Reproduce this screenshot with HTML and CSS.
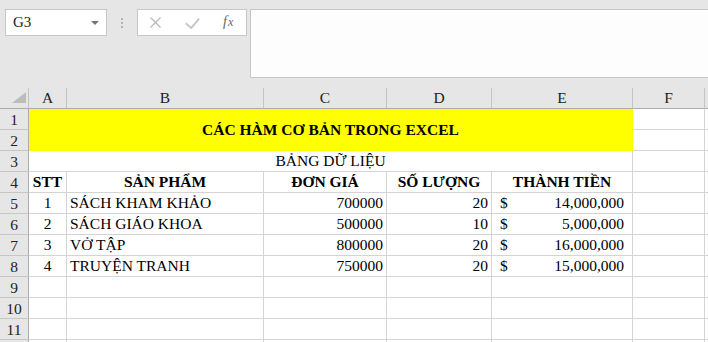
FILE: index.html
```html
<!DOCTYPE html>
<html lang="vi">

<head>
    <meta charset="UTF-8">
    <meta name="viewport" content="width=device-width, initial-scale=1.0">
    <title>Các hàm cơ bản trong Excel</title>
    <link rel="stylesheet" href="styles.css">
</head>

<body>
    <!-- thanh công thức -->
    <div class="toolbar">
        <div class="name-box">
            <span class="name-text">G3</span>
            <span class="caret"></span>
        </div>
        <div class="grip"><i></i><i></i><i></i></div>
        <div class="fx-box">
            <svg class="icon-cancel" width="11" height="11" viewBox="0 0 11 11">
                <path d="M0.5 0.5 L10.5 10.5 M10.5 0.5 L0.5 10.5" stroke="#b8b8b8" stroke-width="1.2" fill="none" />
            </svg>
            <svg class="icon-enter" width="15" height="11" viewBox="0 0 15 11">
                <path d="M0.7 5.2 L6.2 10 L14.3 0.6" stroke="#c8c8c8" stroke-width="2" fill="none" />
            </svg>
            <span class="fx">f<span class="fx-x">x</span></span>
        </div>
        <div class="formula-input"></div>
    </div>

    <!-- bảng tính -->
    <div class="sheet">
        <div class="corner">
            <svg width="14" height="11" viewBox="0 0 14 11">
                <polygon points="14,0 14,11 0,11" fill="#bdbdbd" />
            </svg>
        </div>
        <div class="col-hdr">A</div>
        <div class="col-hdr">B</div>
        <div class="col-hdr">C</div>
        <div class="col-hdr">D</div>
        <div class="col-hdr">E</div>
        <div class="col-hdr">F</div>
        <div class="col-hdr"></div>

        <div class="row-hdr">1</div>
        <div class="cell title">CÁC HÀM CƠ BẢN TRONG EXCEL</div>
        <div class="cell"></div>
        <div class="cell"></div>

        <div class="row-hdr">2</div>
        <div class="cell"></div>
        <div class="cell"></div>

        <div class="row-hdr">3</div>
        <div class="cell caption">BẢNG DỮ LIỆU</div>
        <div class="cell"></div>
        <div class="cell"></div>

        <div class="row-hdr">4</div>
        <div class="cell th">STT</div>
        <div class="cell th">SẢN PHẨM</div>
        <div class="cell th">ĐƠN GIÁ</div>
        <div class="cell th">SỐ LƯỢNG</div>
        <div class="cell th">THÀNH TIỀN</div>
        <div class="cell"></div>
        <div class="cell"></div>

        <div class="row-hdr">5</div>
        <div class="cell center">1</div>
        <div class="cell">SÁCH KHAM KHẢO</div>
        <div class="cell num">700000</div>
        <div class="cell num">20</div>
        <div class="cell acct"><span>$</span><span>14,000,000</span></div>
        <div class="cell"></div>
        <div class="cell"></div>

        <div class="row-hdr">6</div>
        <div class="cell center">2</div>
        <div class="cell">SÁCH GIÁO KHOA</div>
        <div class="cell num">500000</div>
        <div class="cell num">10</div>
        <div class="cell acct"><span>$</span><span>5,000,000</span></div>
        <div class="cell"></div>
        <div class="cell"></div>

        <div class="row-hdr">7</div>
        <div class="cell center">3</div>
        <div class="cell">VỞ TẬP</div>
        <div class="cell num">800000</div>
        <div class="cell num">20</div>
        <div class="cell acct"><span>$</span><span>16,000,000</span></div>
        <div class="cell"></div>
        <div class="cell"></div>

        <div class="row-hdr">8</div>
        <div class="cell center">4</div>
        <div class="cell">TRUYỆN TRANH</div>
        <div class="cell num">750000</div>
        <div class="cell num">20</div>
        <div class="cell acct"><span>$</span><span>15,000,000</span></div>
        <div class="cell"></div>
        <div class="cell"></div>

        <div class="row-hdr">9</div>
        <div class="cell"></div><div class="cell"></div><div class="cell"></div><div class="cell"></div>
        <div class="cell"></div><div class="cell"></div><div class="cell"></div>

        <div class="row-hdr">10</div>
        <div class="cell"></div><div class="cell"></div><div class="cell"></div><div class="cell"></div>
        <div class="cell"></div><div class="cell"></div><div class="cell"></div>

        <div class="row-hdr">11</div>
        <div class="cell"></div><div class="cell"></div><div class="cell"></div><div class="cell"></div>
        <div class="cell"></div><div class="cell"></div><div class="cell"></div>

        <!-- hàng 12 chỉ lộ 2px ở mép dưới -->
        <div class="row-hdr edge"></div>
        <div class="cell edge"></div><div class="cell edge"></div><div class="cell edge"></div><div class="cell edge"></div>
        <div class="cell edge"></div><div class="cell edge"></div><div class="cell edge"></div>
    </div>
</body>

</html>
```

FILE: styles.css
```css
body {
    margin: 0;
    overflow: hidden;
    background: #ffffff;
    font-family: "Liberation Serif", "Times New Roman", serif;
    font-size: 15.5px;
    color: #000;
}

/* thanh công thức */
.toolbar {
    display: flex;
    align-items: flex-start;
    height: 88px;
    padding: 9px 0 0 5px;
    box-sizing: border-box;
    background: #e6e6e6;
    overflow: hidden;
}

.name-box {
    display: flex;
    align-items: center;
    justify-content: space-between;
    width: 102px;
    height: 27px;
    padding: 0 7px 0 7px;
    box-sizing: border-box;
    background: #ffffff;
    border: 1px solid #c6c6c6;
    flex-shrink: 0;
}

.name-text {
    font-size: 15px;
    color: #222;
}

.caret {
    width: 0;
    height: 0;
    border-left: 4px solid transparent;
    border-right: 4px solid transparent;
    border-top: 4px solid #767676;
}

.grip {
    display: flex;
    flex-direction: column;
    gap: 2px;
    margin: 9px 14px 0 14px;
}

.grip i {
    display: block;
    width: 2px;
    height: 2px;
    background: #b4b4b4;
}

.fx-box {
    display: flex;
    align-items: center;
    width: 110px;
    height: 27px;
    padding-left: 12px;
    box-sizing: border-box;
    background: #ffffff;
    border: 1px solid #c6c6c6;
    flex-shrink: 0;
}

.icon-enter {
    margin-left: 24px;
    margin-top: 2px;
}

.fx {
    margin-left: 23px;
    margin-top: -2px;
    font-style: italic;
    font-size: 14px;
    color: #666;
}

.fx-x {
    font-size: 12px;
    margin-left: 1px;
}

.formula-input {
    flex: 1;
    height: 69px;
    margin-left: 3px;
    margin-right: -2px;
    box-sizing: border-box;
    background: #fdfdfd;
    border: 1px solid #c6c6c6;
}

/* lưới ô */
.sheet {
    display: grid;
    grid-template-columns: 29px 38px 197px 123px 105px 141px 72px 1fr;
    grid-template-rows: repeat(12, 21px) 2px;
}

.sheet > div {
    box-sizing: border-box;
    border-right: 1px solid #d4d4d4;
    border-bottom: 1px solid #d4d4d4;
    white-space: nowrap;
    overflow: hidden;
}

.sheet > .edge {
    border-bottom: 0;
}

.sheet > .corner {
    display: flex;
    justify-content: flex-end;
    align-items: flex-end;
    padding: 0 2px 5px 0;
    background: #e6e6e6;
    border-right-color: #c4c4c4;
    border-bottom-color: #ababab;
}

.sheet > .col-hdr {
    display: flex;
    align-items: center;
    justify-content: center;
    background: #e6e6e6;
    color: #222;
    border-right-color: #c4c4c4;
    border-bottom-color: #ababab;
}

.sheet > .row-hdr {
    display: flex;
    align-items: center;
    justify-content: center;
    padding-top: 1px;
    background: #e6e6e6;
    color: #222;
    border-right-color: #ababab;
    border-bottom-color: #c6c6c6;
}

.cell {
    display: flex;
    align-items: flex-end;
    padding: 0 3px 2px 3px;
    line-height: 17px;
}

.sheet > .title {
    grid-column: span 5;
    grid-row: span 2;
    align-items: center;
    justify-content: center;
    padding: 0;
    font-weight: bold;
    background: #ffff00;
    border-color: #ffff00;
}

.caption {
    grid-column: span 5;
    justify-content: center;
}

.th {
    justify-content: center;
    font-weight: bold;
}

.center {
    justify-content: center;
}

.num {
    justify-content: flex-end;
}

.acct {
    justify-content: space-between;
    padding: 0 8px 2px 8px;
}
```
